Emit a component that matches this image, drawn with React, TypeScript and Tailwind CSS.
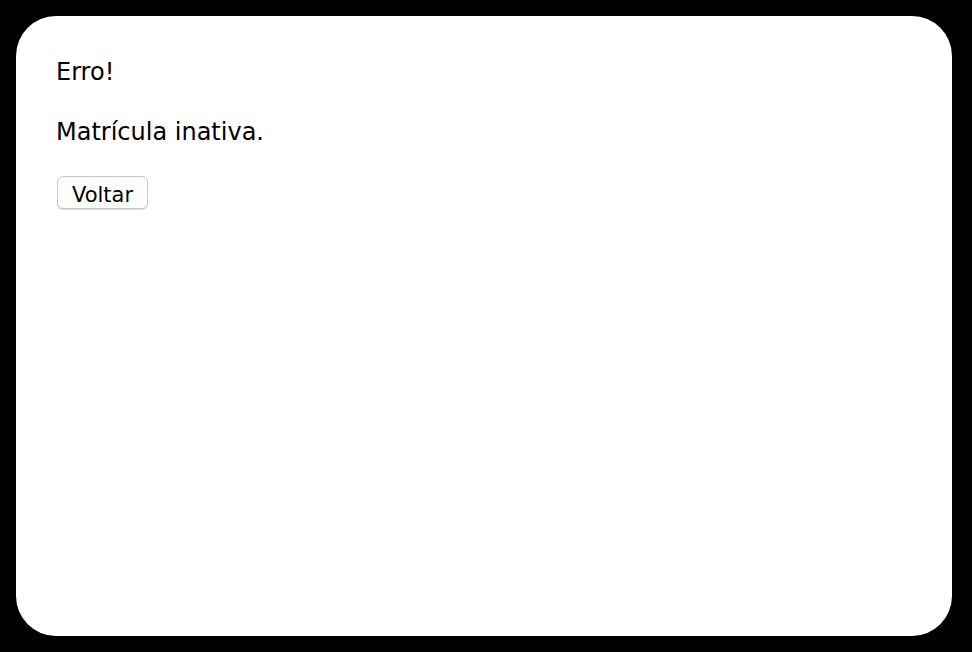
export default function App() {
  return (
    <div className="min-h-screen bg-black p-4 font-['DejaVu_Sans',sans-serif]">
      <div className="h-[620px] w-[936px] rounded-[40px] bg-white px-10 pt-[42px] text-black">
        <p className="text-[24px] leading-[28px]">Erro!</p>
        <p className="mt-[32px] text-[24px] leading-[28px]">Matrícula inativa.</p>
        <button className="mt-[30px] ml-px h-[33px] w-[91px] rounded-[6px] border border-[#c8c8c8] bg-white pt-[5px] text-[21px] leading-none shadow-[0_1px_1px_rgba(0,0,0,0.15)]">
          Voltar
        </button>
      </div>
    </div>
  );
}
